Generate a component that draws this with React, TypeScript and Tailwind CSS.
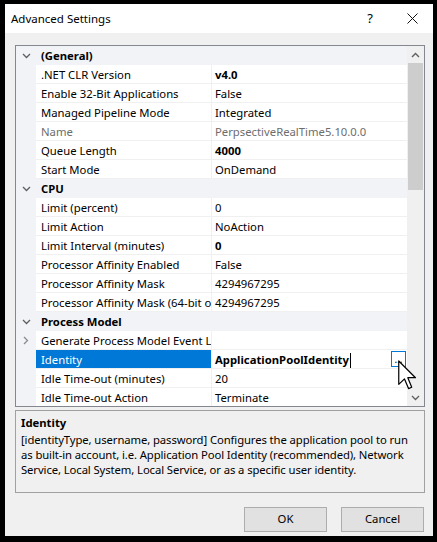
import React from "react";

type Item =
  | { cat: string }
  | {
      label: string;
      value: string;
      bold?: boolean;
      muted?: boolean;
      expand?: boolean;
      selected?: boolean;
    };

const items: Item[] = [
  { cat: "(General)" },
  { label: ".NET CLR Version", value: "v4.0", bold: true },
  { label: "Enable 32-Bit Applications", value: "False" },
  { label: "Managed Pipeline Mode", value: "Integrated" },
  { label: "Name", value: "PerpsectiveRealTime5.10.0.0", muted: true },
  { label: "Queue Length", value: "4000", bold: true },
  { label: "Start Mode", value: "OnDemand" },
  { cat: "CPU" },
  { label: "Limit (percent)", value: "0" },
  { label: "Limit Action", value: "NoAction" },
  { label: "Limit Interval (minutes)", value: "0", bold: true },
  { label: "Processor Affinity Enabled", value: "False" },
  { label: "Processor Affinity Mask", value: "4294967295" },
  { label: "Processor Affinity Mask (64-bit option)", value: "4294967295" },
  { cat: "Process Model" },
  { label: "Generate Process Model Event Log Entry", value: "", expand: true },
  { label: "Identity", value: "ApplicationPoolIdentity", bold: true, selected: true },
  { label: "Idle Time-out (minutes)", value: "20" },
  { label: "Idle Time-out Action", value: "Terminate" },
];

function ChevronDown() {
  return (
    <svg width="9" height="6" viewBox="0 0 9 6" className="text-[#5f5f5f]">
      <path d="M1 1 L4.5 4.5 L8 1" fill="none" stroke="currentColor" strokeWidth="1.3" />
    </svg>
  );
}

function ChevronRight() {
  return (
    <svg width="6" height="9" viewBox="0 0 6 9" className="text-[#8a8a8a]">
      <path d="M1 1 L4.5 4.5 L1 8" fill="none" stroke="currentColor" strokeWidth="1.3" />
    </svg>
  );
}

function ChevronUp() {
  return (
    <svg width="9" height="6" viewBox="0 0 9 6" className="text-[#606060]">
      <path d="M1 5 L4.5 1.5 L8 5" fill="none" stroke="currentColor" strokeWidth="1.4" />
    </svg>
  );
}

function GridRow({ item }: { item: Item }) {
  if ("cat" in item) {
    return (
      <div className="flex h-[19px] shrink-0 items-center bg-[#f1f3f6] pt-px">
        <div className="flex w-[20px] justify-center">
          <ChevronDown />
        </div>
        <span className="pl-[5px] font-bold text-black">{item.cat}</span>
      </div>
    );
  }
  const textColor = item.muted ? "text-[#6d6d6d]" : "text-black";
  return (
    <div className="flex h-[19px] shrink-0">
      <div className="flex w-[20px] items-center justify-center bg-[#f1f3f6]">
        {item.expand && <ChevronRight />}
      </div>
      <div
        className={`flex w-[175px] items-center overflow-hidden whitespace-nowrap border-b border-[#f0f0f0] pl-[5px] pt-[2px] ${
          item.selected ? "bg-[#0078d7] text-white" : textColor
        }`}
      >
        {item.label}
      </div>
      <div className="w-px bg-[#f0f0f0]" />
      <div
        className={`flex flex-1 items-center overflow-hidden whitespace-nowrap border-b border-[#f0f0f0] pl-[3px] pt-[2px] ${textColor} ${
          item.bold ? "font-bold" : ""
        }`}
      >
        {item.value}
        {item.selected && (
          <>
            <span className="ml-px h-[15px] w-px bg-black" />
            <span className="mb-[2px] ml-auto mr-px flex h-[16px] w-[15px] items-end justify-center border border-[#0078d7] bg-white pb-[2px] text-[10px] leading-none font-normal">
              ...
            </span>
          </>
        )}
      </div>
    </div>
  );
}

export default function App() {
  return (
    <div className="h-[542px] w-[437px] bg-black pb-[6px] pl-[5px] pr-[4px] pt-[4px] font-['Noto_Sans',sans-serif] text-[11.3px] text-black">
      <div className="relative flex h-full flex-col bg-[#f0f0f0]">
        {/* Title bar */}
        <div className="flex h-[29px] items-center bg-white pl-[6px]">
          <span className="text-[11.5px]">Advanced Settings</span>
          <span className="ml-auto mr-[34px] text-[13px]">?</span>
          <svg width="11" height="11" viewBox="0 0 11 11" className="mr-[15px]">
            <path d="M0.5 0.5 L10.5 10.5 M10.5 0.5 L0.5 10.5" stroke="#111" strokeWidth="1" />
          </svg>
        </div>

        {/* Body */}
        <div className="flex flex-1 flex-col pl-[10px] pr-[8px] pt-[12px]">
          {/* Property grid */}
          <div className="flex h-[362px] w-[410px] border border-[#828790] bg-white">
            <div className="flex flex-1 flex-col overflow-hidden">
              {items.map((it, i) => (
                <GridRow key={i} item={it} />
              ))}
            </div>
            <div className="flex w-[17px] flex-col items-center bg-[#f0f0f0]">
              <div className="flex h-[17px] items-center justify-center pt-px">
                <ChevronUp />
              </div>
              <div className="h-[127px] w-[15px] bg-[#cdcdcd]" />
              <div className="mt-auto flex h-[17px] items-center justify-center">
                <ChevronDown />
              </div>
            </div>
          </div>

          {/* Description */}
          <div className="mt-[3px] h-[83px] w-[410px] border border-[#a0a0a0] pl-[5px] pt-[4px] leading-[15px]">
            <div className="font-bold">Identity</div>
            <div className="mt-[2px] whitespace-nowrap tracking-[-0.1px]">
              [identityType, username, password] Configures the application pool to run
              <br />
              as built-in account, i.e. Application Pool Identity (recommended), Network
              <br />
              Service, Local System, Local Service, or as a specific user identity.
            </div>
          </div>

          {/* Buttons */}
          <div className="mt-[14px] flex justify-end gap-[14px] pr-px">
            <button className="h-[25px] w-[83px] border border-[#adadad] bg-[#e1e1e1]">OK</button>
            <button className="h-[25px] w-[83px] border border-[#adadad] bg-[#e1e1e1]">Cancel</button>
          </div>
        </div>

        {/* Mouse cursor over the ellipsis button */}
        <svg
          width="19"
          height="30"
          viewBox="0 0 12.6 19.6"
          className="absolute left-[393px] top-[356px]"
        >
          <path
            d="M0.5 0.5 L0.5 16 L4.3 12.4 L7 18.8 L9.1 17.9 L6.5 11.6 L11.6 11.6 Z"
            fill="white"
            stroke="black"
            strokeWidth="0.8"
            strokeLinejoin="round"
          />
        </svg>
      </div>
    </div>
  );
}
